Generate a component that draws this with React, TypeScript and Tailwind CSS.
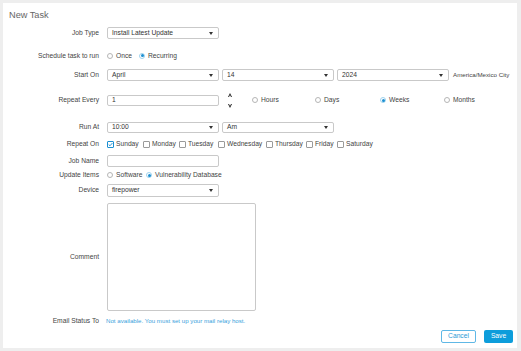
import React from "react";

const Caret = () => (
  <svg width="4" height="3" viewBox="0 0 4 3" className="shrink-0">
    <path d="M0 0 L4 0 L2 3 Z" fill="#333" />
  </svg>
);

function Select({ value, w = "w-[112px]", h = "h-[12px]" }: { value: string; w?: string; h?: string }) {
  return (
    <div className={`${w} ${h} border border-[#c9c9c9] rounded-[2px] bg-white flex items-center justify-between pl-[4px] pr-[5px] text-[6.7px] text-[#333] shrink-0`}>
      <span>{value}</span>
      <Caret />
    </div>
  );
}

function Radio({ checked, label, w }: { checked?: boolean; label: string; w?: string }) {
  return (
    <div className={`flex items-center gap-[3px] ${w ?? ""} shrink-0`}>
      <span className={`w-[6px] h-[6px] rounded-full border ${checked ? "border-[#9fd3ee]" : "border-[#b5b5b5]"} flex items-center justify-center bg-white`}>
        {checked && <span className="w-[3px] h-[3px] rounded-full bg-[#1b8fd2]" />}
      </span>
      <span className="text-[6.7px] text-[#444]">{label}</span>
    </div>
  );
}

function Check({ checked, label, w }: { checked?: boolean; label: string; w: string }) {
  return (
    <div className={`flex items-center gap-[2px] ${w} shrink-0`}>
      <span className={`w-[7px] h-[7px] rounded-[1px] border ${checked ? "border-[#1b8fd2]" : "border-[#9a9a9a]"} flex items-center justify-center bg-white`}>
        {checked && (
          <svg width="7" height="7" viewBox="0 0 7 7">
            <path d="M1 3.6 L2.8 5.3 L6.2 1.4" stroke="#1b8fd2" strokeWidth="1.3" fill="none" />
          </svg>
        )}
      </span>
      <span className="text-[6.7px] text-[#444]">{label}</span>
    </div>
  );
}

function Row({ label, mt, h, children, alignTop }: { label: string; mt: string; h: string; children?: React.ReactNode; alignTop?: boolean }) {
  return (
    <div className={`flex ${alignTop ? "items-stretch" : "items-center"} ${mt} ${h} shrink-0`}>
      <div className={`w-[96px] text-right text-[6.7px] text-[#444] shrink-0 ${alignTop ? "flex items-center justify-end" : ""}`}>{label}</div>
      <div className="ml-[8px] flex items-center h-full">{children}</div>
    </div>
  );
}

export default function App() {
  return (
    <div
      className="w-[521px] h-[351px] bg-[#eeeeee] pt-[3px] pl-[3px] overflow-hidden"
      style={{ fontFamily: '"Liberation Sans", Arial, sans-serif' }}
    >
      <div className="w-[514px] h-[345px] bg-white flex flex-col">
        <div className="mt-[7px] h-[11px] pl-[6px] text-[9.2px] leading-[11px] text-[#666]">New Task</div>

        <Row label="Job Type" mt="mt-[6px]" h="h-[12px]">
          <Select value="Install Latest Update" />
        </Row>

        <Row label="Schedule task to run" mt="mt-[11px]" h="h-[12px]">
          <Radio label="Once" w="w-[32px]" />
          <Radio label="Recurring" checked />
        </Row>

        <Row label="Start On" mt="mt-[7px]" h="h-[12px]">
          <div className="flex items-center gap-[3px]">
            <Select value="April" />
            <Select value="14" />
            <Select value="2024" />
            <span className="ml-[1px] text-[6.2px] text-[#444]">America/Mexico City</span>
          </div>
        </Row>

        <Row label="Repeat Every" mt="mt-[11px]" h="h-[17px]">
          <div className="flex items-center">
            <div className="w-[112px] h-[11px] border border-[#c9c9c9] rounded-[2px] pl-[4px] flex items-center text-[6.7px] text-[#333] shrink-0">1</div>
            <div className="ml-[9px] w-[4px] h-[17px] flex flex-col justify-between py-[1px]">
              <svg width="4" height="4" viewBox="0 0 4 4"><path d="M0 4 L2 0 L4 4 L3 4 L2 2 L1 4 Z" fill="#222" /></svg>
              <svg width="4" height="4" viewBox="0 0 4 4"><path d="M0 0 L2 4 L4 0 L3 0 L2 2 L1 0 Z" fill="#222" /></svg>
            </div>
            <div className="ml-[20px] flex items-center">
              <Radio label="Hours" w="w-[63px]" />
              <Radio label="Days" w="w-[65px]" />
              <Radio label="Weeks" checked w="w-[64px]" />
              <Radio label="Months" />
            </div>
          </div>
        </Row>

        <Row label="Run At" mt="mt-[13px]" h="h-[11px]">
          <div className="flex items-center gap-[3px]">
            <Select value="10:00" h="h-[11px]" />
            <Select value="Am" h="h-[11px]" />
          </div>
        </Row>

        <Row label="Repeat On" mt="mt-[6px]" h="h-[10px]">
          <Check label="Sunday" checked w="w-[36px]" />
          <Check label="Monday" w="w-[36px]" />
          <Check label="Tuesday" w="w-[39px]" />
          <Check label="Wednesday" w="w-[48px]" />
          <Check label="Thursday" w="w-[40px]" />
          <Check label="Friday" w="w-[31px]" />
          <Check label="Saturday" w="w-[40px]" />
        </Row>

        <Row label="Job Name" mt="mt-[6px]" h="h-[12px]">
          <div className="w-[112px] h-[12px] border border-[#c9c9c9] rounded-[2px]" />
        </Row>

        <Row label="Update Items" mt="mt-[3px]" h="h-[10px]">
          <Radio label="Software" w="w-[39px]" />
          <Radio label="Vulnerability Database" checked />
        </Row>

        <Row label="Device" mt="mt-[4px]" h="h-[13px]">
          <Select value="firepower" h="h-[13px]" />
        </Row>

        <Row label="Comment" mt="mt-[6px]" h="h-[108px]" alignTop>
          <div className="w-[149px] h-[108px] border border-[#c9c9c9] rounded-[2px]" />
        </Row>

        <Row label="Email Status To" mt="mt-[5px]" h="h-[10px]">
          <span className="-ml-[1px] text-[6.15px] text-[#3aa2dc]">Not available. You must set up your mail relay host.</span>
        </Row>

        <div className="mt-[4px] h-[13px] flex items-center justify-end pr-[4px] gap-[8px]">
          <div className="w-[35px] h-[13px] border border-[#5fb8e6] rounded-[2px] flex items-center justify-center text-[6.7px] text-[#2a9ad6]">Cancel</div>
          <div className="w-[29px] h-[13px] bg-[#0d9ddb] rounded-[2px] flex items-center justify-center text-[6.7px] text-white">Save</div>
        </div>
      </div>
    </div>
  );
}
